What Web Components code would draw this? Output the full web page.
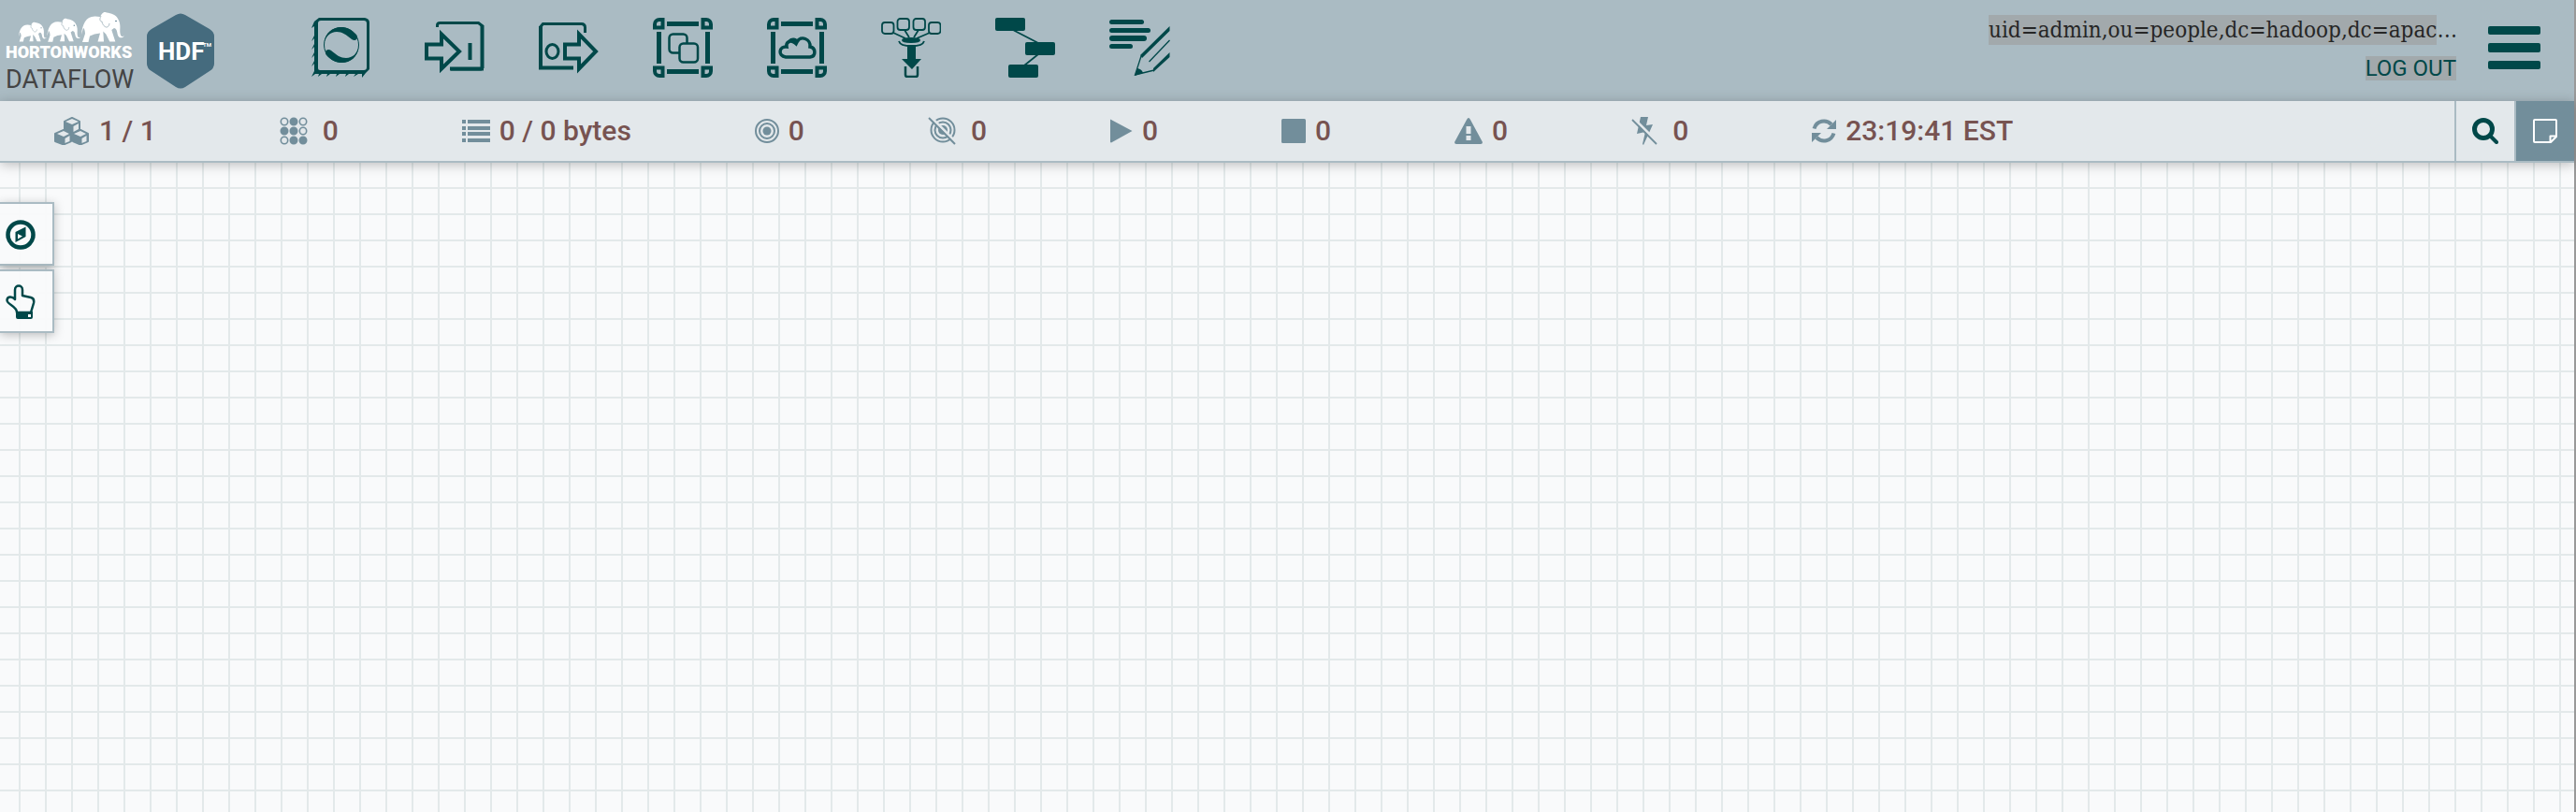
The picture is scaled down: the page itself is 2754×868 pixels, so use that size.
<!DOCTYPE html>
<html lang="en"><head><meta charset="utf-8"><title>NiFi Flow</title>
<style>html,body{margin:0;height:100%}body{font-family:Roboto,sans-serif}</style></head>
<body>
<flow-app></flow-app>
<script>
const make = (name, html, init) => customElements.define(name, class extends HTMLElement {
  constructor() {
    super();
    const t = document.createElement('template');
    t.innerHTML = html;
    this.attachShadow({ mode: 'open' }).append(t.content.cloneNode(true));
  }
  connectedCallback() { if (init) init(this, this.shadowRoot); }
});

/* Corner handles and edges shared by the two group icons */
const frame = `<g fill="none" stroke="#004849" stroke-width="4"><path d="M2 10.500V7a5 5 0 0 1 5-5h3.500v8.500zM62 10.500V7a5 5 0 0 0-5-5h-3.500v8.500zM2 53.500V57a5 5 0 0 0 5 5h3.500v-8.500zM62 53.500V57a5 5 0 0 1-5 5h-3.500v-8.500z"/><path stroke-width="5" d="M15 6.500h34M15 57.500h34M6.500 15v34M58.500 15v34"/></g>`;

const filled = ['10', '01', '11', '12', '22'];
const icons = {
 processor:[64,64,`<g transform="translate(1)"><path fill="#004849" fill-rule="evenodd" d="M8 0h49q5 1 5 5v50l-4 4-4 5v-4h-4l-5 3 2-3h-7l-4 3 1-3h-7l-4 3 1-3h-7l-4 3 1-3h-6l-4 3 1-3H4l-4 3 3-6v-8l-3 3 3-6v-6l-3 3 3-6v-6l-3 3 3-6v-6l-3 3 3-6V9l-3 2 3-7zM10 3q-3 0-3 3v48q0 2 2 2h47q3 0 3-3V6q0-3-3-3z"/><circle cx="32" cy="29" r="18.500" fill="none" stroke="#004849"/><path fill="#004849" d="M13.500 27C15 9 36 4 48 18c3 4-1 8-5 5-6-5-10-8-16-8-7 0-12 5-13.500 12zM50.500 31C49 49 28 54 16 40c-3-4 1-8 5-5 6 5 10 8 16 8 7 0 12-5 13.500-12z"/></g>`],
 input:[64,64,`<g fill="none" stroke="#004849"><path stroke-width="4" d="M2 28.500h16V17.500L37 36 18 54.500V43.500H2z"/><path stroke-width="3" d="M13.500 10V8q0-2.500 3-2.500h41l4 3V55H28"/><path stroke-width="4" d="M61.500 8v46M27 54.500h34M48.500 27v18"/></g>`],
 output:[64,64,`<g fill="none" stroke="#004849"><path stroke-width="4" d="M28 28.500h15V17.500L61 36 43 54.500V43.500H28z"/><path stroke-width="3" d="M1.500 54V10l3-3.500h41q4 0 4 4V16"/><path stroke-width="4" d="M2 9v44.500h35"/><ellipse cx="14.500" cy="36" rx="6.500" ry="7.500" stroke-width="3"/></g>`],
 group:[64,64,frame+`<g stroke="#004849" stroke-width="2.500" fill="none"><rect x="17.500" y="17.500" width="19" height="20" rx="4"/><rect x="28.500" y="27.500" width="19.500" height="20" rx="4" fill="#aabbc3"/></g>`],
 remote:[64,64,frame+`<path fill="none" stroke="#004849" stroke-width="3.500" d="M20 42C11 41 13 30 21 31c-1-5 4-8 9-4 0-3-4-4-6-2 3-3 7-2 8 1 4-8 15-3 14 5 6 1 7 10 0 11z"/>`],
 funnel:[64,64,`<g fill="none" stroke="#004849" stroke-width="1.800"><rect x="1" y="5" width="12.500" height="12" rx="3"/><rect x="17.500" y="1" width="12.500" height="12" rx="3"/><rect x="34.500" y="1" width="12.500" height="12" rx="3"/><rect x="51" y="5" width="12.500" height="12" rx="3"/><path d="M13 16l13 6M25 13l5 8M40 13l-5 8M52 16l-14 6M19 25c2 7 25 7 27 0"/><path stroke-width="2.500" d="M26 52v9q0 2 2 2h9q2 0 2-2v-9"/></g><path fill="#004849" d="M22 24q0-3 10-3t10 3-10 3-10-3M28 29h9v15h6L33 55 22 44h6z"/>`],
 template:[64,64,`<g fill="#004849"><rect width="32" height="14" rx="2"/><rect x="32" y="26" width="32" height="14" rx="2"/><rect x="14" y="50" width="32" height="14" rx="2"/></g><path stroke="#004849" stroke-width="1.800" d="M19 13l27 14M46 39L31 51"/>`],
 label:[66,64,`<g transform="translate(0 2)"><g fill="#004849"><rect y="0" width="37" height="5" rx="2.500"/><rect y="9" width="44" height="5" rx="2.500"/><rect y="17" width="40" height="6" rx="3"/><rect y="26" width="25" height="5" rx="2.500"/><path d="M33 38L64.500 7v5L35 41zM47 56l17.500-16v-5L47 52zM27 60l3-8q5 1 6 5z"/></g><path fill="none" stroke="#004849" stroke-width="1.300" d="M42.500 45l22-23M34 39l-6.500 20L48 54"/></g>`],
 menu:[56,46,`<g fill="#004849"><rect width="56" height="9" rx="2"/><rect y="18" width="56" height="10" rx="2"/><rect y="37" width="56" height="9" rx="2"/></g>`],
 cubes:[38,30,`<g fill="#728e9b" stroke="#728e9b" stroke-linejoin="round" stroke-width="2"><path d="M19 1l8 4v9l-8 4-8-4V5zM10 14l8 4v8l-8 3.500L1 26v-8zM28 14l8 4v8l-8 3.500-8-3.500v-8z"/></g><path fill="#e3e8eb" d="M19 2l7 3-7 3-7-3zM10 15l6 3-6 3-7-3zM28 15l6 3-6 3-7-3zM20.500 10L26 7v6l-5.500 3zM11.500 23l5-3v6l-5 2zM29.500 23l5-3v6l-5 2z"/>`],
 threads:[30,30,[0,1,2].map(y=>[0,1,2].map(x=>`<circle cx="${x*10+5}" cy="${y*10+5}" r="3.700" stroke-width="1.600" stroke="#728e9b" fill="${filled.includes(''+x+y)?'#728e9b':'none'}"/>`).join('')).join('')],
 list:[30,24,`<path stroke="#728e9b" stroke-width="4" d="M0 2h4M6 2h24M0 9h4M6 9h24M0 15h4M6 15h24M0 22h4M6 22h24"/>`],
 target:[26,26,`<g fill="none" stroke="#728e9b" stroke-width="2"><circle cx="13" cy="13" r="12"/><circle cx="13" cy="13" r="8"/></g><circle cx="13" cy="13" r="4.500" fill="#728e9b"/>`],
 untarget:[30,30,`<g fill="none" stroke="#728e9b" stroke-width="2"><circle cx="16" cy="14" r="12.500"/><circle cx="16" cy="14" r="8.500"/></g><circle cx="16" cy="14" r="5" fill="#728e9b"/><path stroke="#e3e8eb" stroke-width="3" d="M3 0l27 27"/><path stroke="#728e9b" stroke-width="2" d="M1 1l28 28"/>`],
 play:[24,26,`<path fill="#728e9b" d="M0 1q0-1 1 0l22.500 12L1 25.500q-1 0-1-1z"/>`],
 stop:[26,26,`<rect width="26" height="26" rx="1.500" fill="#728e9b"/>`],
 warn:[30,28,`<path fill="#728e9b" fill-rule="evenodd" d="M15 0q1 0 2 2l13 24q0 2-2 2H2q-2 0-2-2L13 2q1-2 2-2zM12.500 9v8h5V9zM12.500 19v5h5v-5z"/>`],
 bolt:[28,30,`<path fill="#728e9b" d="M10 0h8l-2 9 7-1-4 9-6 13-1-1 3-13-9 2z"/><path stroke="#e3e8eb" stroke-width="3" d="M2 1l27 27"/><path stroke="#728e9b" stroke-width="1.800" d="M1 3l26 26"/>`],
 refresh:[26,26,`<g fill="none" stroke="#728e9b" stroke-width="4"><path d="M2.500 10.500C5 2 15 0 21 6M23.500 15.500C21 24 11 26 5 20"/></g><path fill="#728e9b" d="M26 1v10H16zM0 25V15h10z"/>`],
 search:[28,28,`<circle cx="12" cy="12" r="9.500" fill="none" stroke="#004849" stroke-width="5"/><path stroke="#004849" stroke-linecap="round" stroke-width="4" d="M19 19l7 7"/>`],
 note:[26,26,`<path fill="none" stroke="#fff" stroke-width="2" stroke-linejoin="round" d="M1 2q0-1 1-1h22q1 0 1 1v17l-6 6H2q-1 0-1-1zM25 18.500h-6.500V25"/>`],
 compass:[32,32,`<circle cx="16" cy="16" r="13.500" fill="none" stroke="#004849" stroke-width="4.500"/><path fill="#004849" fill-rule="evenodd" d="M21.500 7.500v10.500L10.500 24V13zM13 15v5.500l5-3z"/>`],
 hand:[32,38,`<path fill="none" stroke="#004849" stroke-width="2.500" stroke-linejoin="round" d="M12 30c0-7-10-8-10.500-13 0-4 5-5 8.500-1V6c0-6 8-6 8 0v6l9 2q4 1 3 6l-3 10z"/><path fill="#004849" fill-rule="evenodd" d="M11 29h18v6q0 2-2 2H13q-2 0-2-2zM24 32v3h3v-3z"/>`],
};
make('flow-icon', `<style>:host{display:block;flex:none}svg{display:block}</style><div></div>`, (el, r) => {
  const [w, h, body] = icons[el.getAttribute('name')];
  r.querySelector('div').innerHTML = `<svg width="${w}" height="${h}" viewBox="0 0 ${w} ${h}" aria-hidden="true">${body}</svg>`;
});

const elephant = '<path d="M80 25C81 14 85 5 95 5.500L100 6C102 3 103 0 107 1.500c5 .5 10 2.500 12 6.500 3 5 2.500 9 2.300 13 0 6 2.400 7 4.400 5.300-1 2.400-4.700 2.700-6 .7-2-3-.7-8-4.700-9l-2.700 2 4 12.500h-6l-4-8-3-3 .7 11h-6.500l2.500-9-6 1-5 2-1.500 6.500h-6.500l3-9c0-3-1-6-2-6z"/><path fill="none" stroke="#aabbc3" stroke-width="1" d="M101 5c-2 4-1 6 1 6 1 6 7 9 8 2"/><circle cx="117" cy="10.500" r=".8" fill="#456b7e"/>';
make('flow-logo', `<style>
:host{display:flex;align-items:flex-start;gap:13px;width:228px;padding:12px 0 0 6px;box-sizing:border-box;flex:none}
svg{display:block;flex:none}
text{font-family:Roboto,sans-serif}
</style>
<svg width="138" height="94" viewBox="0 0 138 94" role="img" aria-label="Hortonworks Dataflow">
<g fill="#fff">
<g transform="translate(1 0)">${elephant}</g>
<g transform="translate(-18 7) scale(.78)">${elephant}</g>
<g transform="translate(-38 11) scale(.65)">${elephant}</g>
<text x="0" y="50" font-size="18" font-weight="900">HORTONWORKS</text></g>
<text x="0" y="82" font-size="27" fill="#444">DATAFLOW</text>
</svg>
<svg width="72" height="84" viewBox="0 0 72 84" role="img" aria-label="HDF">
<path fill="#456b7e" d="M31 4q5-3 10 0l26 15q5 3 5 8v29q0 5-5 8L41 81q-5 3-10 0L5 64q-5-3-5-8V27q0-5 5-8z"/>
<text x="12" y="52" font-size="26" font-weight="700" fill="#fff">HDF</text><text x="60" y="38" font-size="6" font-weight="700" fill="#fff">TM</text></svg>`);

make('flow-header', `<style>
:host{display:flex;height:108px;background:#aabbc3;color:#262626}
nav{display:flex;gap:58px;padding:19px 0 0 104px;flex:1}
button{all:unset;display:block;width:64px;height:64px;cursor:pointer}
.user{display:flex;flex-direction:column;align-items:flex-end;padding:16px 34px 0 0}
.id{width:500px;height:32px;line-height:32px;font-family:"DejaVu Serif Condensed","DejaVu Serif",serif;font-size:24px;white-space:nowrap}
.id span{display:inline-block;background:#a2a9ac}
a{margin-top:12px;font-size:24px;line-height:26px;color:#004849;background:#a2a9ac;text-decoration:none}
.menu{width:56px;height:46px;margin:28px 36px 0 0}
</style>
<flow-logo></flow-logo>
<nav aria-label="Components"></nav>
<div class="user"><div class="id"><span>uid=admin,ou=people,dc=hadoop,dc=apac</span>…</div><a href="#logout">LOG OUT</a></div>
<button class="menu" aria-label="Global menu"><flow-icon name="menu"></flow-icon></button>`, (el, r) => {
  r.querySelector('nav').innerHTML = ['processor','input','output','group','remote','funnel','template','label']
    .map(n => `<button aria-label="${n}"><flow-icon name="${n}"></flow-icon></button>`).join('');
});

make('flow-stat', `<style>
:host{display:flex;align-items:center;box-sizing:border-box;flex:none;gap:10px;height:64px;font-size:30px;font-weight:500;line-height:32px;color:#775351;white-space:nowrap}
:host([wide]){gap:16px}
</style><div></div><span><slot></slot></span>`, (el, r) => {
  r.querySelector('div').innerHTML = `<flow-icon name="${el.getAttribute('icon')}"></flow-icon>`;
});

make('flow-status', `<style>
:host{display:flex;height:64px;background:#e3e8eb;border-bottom:2px solid #aabbc3;box-shadow:0 2px 12px rgba(0,0,0,.25);position:relative}
.stats{display:flex;gap:132px;padding-left:58px;flex:1}
button{all:unset;box-sizing:border-box;width:64px;height:64px;border-left:2px solid #aabbc3;display:flex;align-items:center;justify-content:center;cursor:pointer}
.note{background:#728e9b}
</style>
<div class="stats">
<flow-stat icon="cubes">1 / 1</flow-stat><flow-stat icon="threads" wide>0</flow-stat><flow-stat icon="list">0 / 0 bytes</flow-stat><flow-stat icon="target">0</flow-stat><flow-stat icon="untarget" wide>0</flow-stat><flow-stat icon="play">0</flow-stat><flow-stat icon="stop">0</flow-stat><flow-stat icon="warn">0</flow-stat><flow-stat icon="bolt" wide>0</flow-stat><flow-stat icon="refresh">23:19:41 EST</flow-stat>
</div>
<button aria-label="Search"><flow-icon name="search"></flow-icon></button>
<button class="note" aria-label="Bulletins"><flow-icon name="note"></flow-icon></button>`);

make('flow-canvas', `<style>
:host{display:flex;flex-direction:column;align-items:flex-start;gap:4px;flex:1;padding-top:42px;background:
repeating-linear-gradient(90deg,transparent 0 20px,#e3e9ea 20px 22px,transparent 22px 28px),
repeating-linear-gradient(transparent 0 26px,#e3e9ea 26px 28px),#f9fafb}
button{all:unset;box-sizing:border-box;width:58px;height:68px;border:2px solid #aabbc3;border-left:0;background:rgba(249,250,251,.95);box-shadow:0 2px 10px rgba(0,0,0,.25);display:flex;align-items:center;padding:2px 0 0 6px;cursor:pointer}
</style>
<button aria-label="Navigate"><flow-icon name="compass"></flow-icon></button>
<button aria-label="Operate"><flow-icon name="hand"></flow-icon></button>`);

make('flow-app', `<style>:host{display:flex;flex-direction:column;min-height:100vh;box-sizing:border-box;border-right:2px solid #999}</style>
<flow-header></flow-header><flow-status></flow-status><flow-canvas></flow-canvas>`);
</script>
</body></html>
